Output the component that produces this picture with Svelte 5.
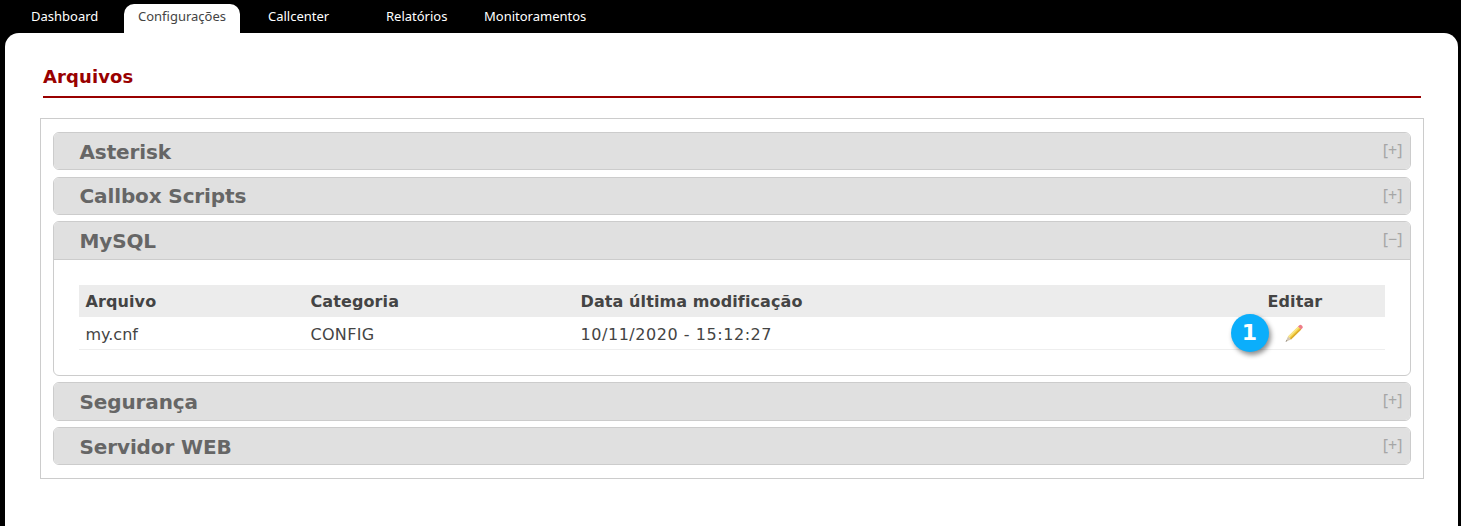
<script>
	const tabs = ['Dashboard', 'Configurações', 'Callcenter', 'Relatórios', 'Monitoramentos'];
	const sections = [
		{ name: 'Asterisk', open: false },
		{ name: 'Callbox Scripts', open: false },
		{ name: 'MySQL', open: true },
		{ name: 'Segurança', open: false },
		{ name: 'Servidor WEB', open: false }
	];
</script>

<div class="page">
	<nav class="tabs">
		{#each tabs as tab, i}
			<a class="tab tab-{i}" class:active={i === 1} href="#top">{tab}</a>
		{/each}
	</nav>

	<main class="content">
		<h1>Arquivos</h1>

		<div class="box">
			{#each sections as section}
				<section class="panel" class:open={section.open}>
					<header>
						<h2>{section.name}</h2>
						<span class="toggle">{section.open ? '[−]' : '[+]'}</span>
					</header>
					{#if section.open}
						<div class="body">
							<div class="table">
								<div class="row head">
									<span>Arquivo</span>
									<span>Categoria</span>
									<span>Data última modificação</span>
									<span>Editar</span>
								</div>
								<div class="row">
									<span>my.cnf</span>
									<span class="cat">CONFIG</span>
									<span class="date">10/11/2020 - 15:12:27</span>
									<span class="edit">
										<b class="badge">1</b>
										<svg width="20" height="20" viewBox="0 0 20 20">
											<path d="M4 13.6 14.2 3.4l3 3L7 16.6z" fill="#f3d145" />
											<path d="M4 13.6 14.2 3.4l1.1 1.1L5.1 14.7z" fill="#f9e68c" />
											<path d="M6 15.6 16.2 5.4l1 1L7 16.6z" fill="#dba92c" />
											<path d="M14 3.6l1.3-1.3a1.6 1.6 0 0 1 2.3 0l.7.7a1.6 1.6 0 0 1 0 2.3L17 6.6z" fill="#ee7d88" />
											<path d="M4 13.6 1.6 18.8 7 16.6z" fill="#d3c7b2" />
											<path d="M2.4 17 1.6 18.8l1.9-.8z" fill="#8a8378" />
										</svg>
									</span>
								</div>
							</div>
						</div>
					{/if}
				</section>
			{/each}
		</div>
	</main>
</div>

<style>
	:global(body) {
		background: #000;
	}

	.page {
		height: 526px;
		overflow: hidden;
		font-family: "DejaVu Sans", Verdana, sans-serif;
		display: flex;
		flex-direction: column;
	}

	.tabs {
		height: 33px;
		display: flex;
		flex-shrink: 0;
		padding: 4px 0 0 14px;
		box-sizing: border-box;
	}

	.tab {
		color: #fff;
		text-decoration: none;
		font-size: 13px;
		line-height: 25px;
		padding-left: 28px;
		white-space: nowrap;
		box-sizing: border-box;
		font-family: "Noto Sans", "DejaVu Sans", sans-serif;
	}

	.tab-0 { width: 110px; padding-left: 17px; }
	.tab-1 { width: 116px; padding-left: 14px; }
	.tab-2 { width: 118px; }
	.tab-3 { width: 98px; }

	.tab.active {
		background: #fff;
		color: #444;
		border-radius: 10px 10px 0 0;
	}

	.content {
		flex: 1;
		background: #fff;
		margin: 0 3px 0 5px;
		border-radius: 14px 14px 0 0;
		padding: 32px 37px 0 38px;
	}

	h1 {
		margin: 0;
		height: 31px;
		line-height: 24px;
		font-size: 18px;
		font-weight: bold;
		letter-spacing: 0.1px;
		color: #990000;
		border-bottom: 2px solid #990000;
	}

	.box {
		margin: 20px -3px 0 -3px;
		border: 1px solid #ccc;
		padding: 13px 12px;
		display: flex;
		flex-direction: column;
		gap: 6.33px;
	}

	.panel {
		border: 1px solid #ccc;
		border-radius: 6px;
		overflow: hidden;
	}

	.panel header {
		box-sizing: border-box;
		height: 36.33px;
		background: #e0e0e0;
		display: flex;
		align-items: center;
		justify-content: space-between;
		padding: 1px 7.5px 0 25.5px;
	}

	.panel.open header {
		border-bottom: 1px solid #ccc;
		height: 37.33px;
	}

	h2 {
		margin: 0;
		font-size: 20px;
		font-weight: bold;
		letter-spacing: -0.12px;
		color: #666;
	}

	.toggle {
		font-size: 16px;
		color: #a6a6a6;
		padding-bottom: 3px;
		font-family: "Noto Sans", sans-serif;
	}

	.body {
		padding: 25px 25px 25.33px;
	}

	.table {
		display: flex;
		flex-direction: column;
		font-size: 16px;
		color: #444;
	}

	.row {
		display: grid;
		grid-template-columns: 225px 270px 687px 1fr;
		padding: 3px 0 0 6.5px;
		height: 33px;
		align-items: center;
		border-bottom: 1px solid #eee;
		box-sizing: border-box;
	}

	.row.head {
		height: 32px;
		padding-top: 2px;
		background: #ececec;
		font-weight: bold;
		letter-spacing: 0.1px;
		border-bottom: 0;
	}

	.cat {
		letter-spacing: 0.3px;
	}

	.date {
		letter-spacing: 0.55px;
	}

	.edit {
		position: relative;
		display: flex;
		align-items: center;
		padding-left: 16px;
		top: -1px;
	}

	.badge {
		position: absolute;
		left: -37px;
		top: -9px;
		width: 38px;
		height: 38px;
		border-radius: 50%;
		background: #0baefb;
		color: #fff;
		font-size: 22px;
		line-height: 38px;
		text-align: center;
		box-shadow: 2px 3px 5px rgba(0, 0, 0, 0.45);
	}
</style>
